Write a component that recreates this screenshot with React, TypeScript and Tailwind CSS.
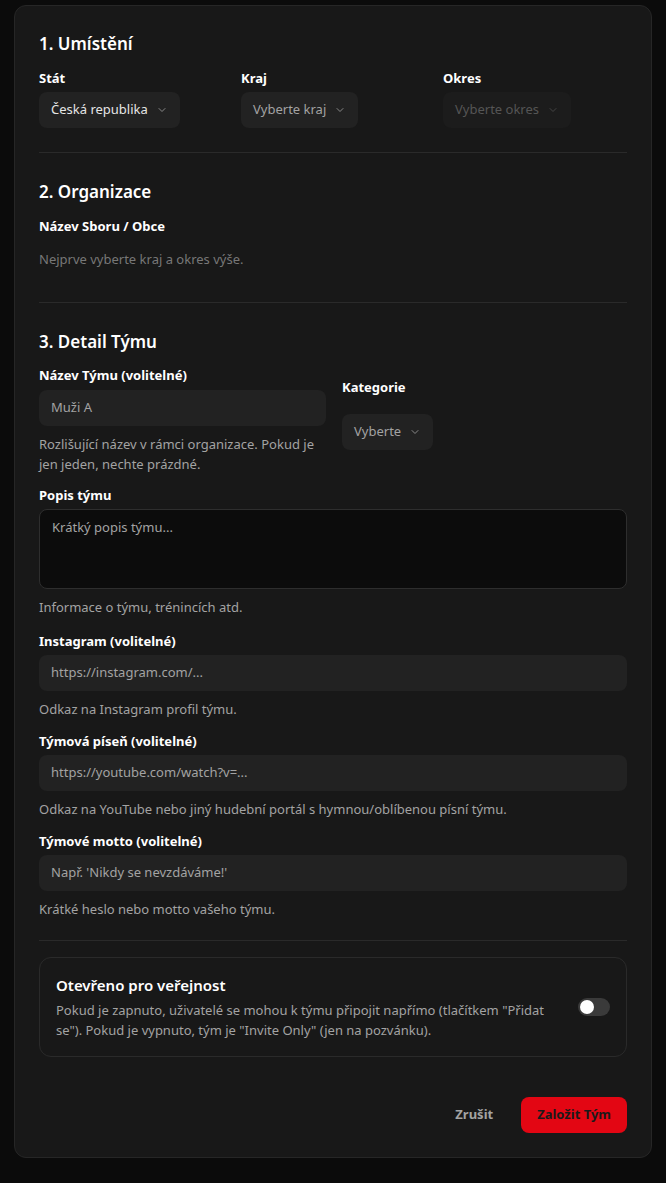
const Chevron = ({ className = "" }: { className?: string }) => (
  <svg width="12" height="12" viewBox="0 0 24 24" fill="none" stroke="currentColor" strokeWidth="2" strokeLinecap="round" strokeLinejoin="round" className={className}>
    <path d="m6 9 6 6 6-6" />
  </svg>
);

const Select = ({ text, dim = false, disabled = false }: { text: string; dim?: boolean; disabled?: boolean }) => (
  <div
    className={`flex h-9 w-fit items-center gap-2 rounded-lg px-3 text-[13px] ${
      disabled ? "bg-[#1c1c1c] text-[#555]" : dim ? "bg-[#222] text-[#a3a3a3]" : "bg-[#222] text-[#e5e5e5]"
    }`}
  >
    <span>{text}</span>
    <Chevron className={disabled ? "text-[#444]" : "text-[#888]"} />
  </div>
);

const Field = ({ label, placeholder, help }: { label: string; placeholder: string; help: string }) => (
  <div>
    <div className="text-[13px] font-bold text-white">{label}</div>
    <div className="mt-1 flex h-9 items-center rounded-lg bg-[#222] px-3 text-[13px] text-[#a3a3a3]">{placeholder}</div>
    <div className="mt-[9px] text-[13px] text-[#a3a3a3]">{help}</div>
  </div>
);

export default function App() {
  return (
    <div className="min-h-[1183px] bg-[#0b0b0b] px-[14px] pt-[5px] pb-[9px] font-['Inter',sans-serif]">
      <div className="rounded-xl border border-[#262626] bg-[#181818] px-6 pt-[25px] pb-6">
        <h2 className="text-[17px] font-semibold text-white">1. Umístění</h2>
        <div className="mt-3 grid grid-cols-[202px_202px_1fr]">
          <div>
            <div className="text-[13px] font-bold text-white">Stát</div>
            <div className="mt-1"><Select text="Česká republika" /></div>
          </div>
          <div>
            <div className="text-[13px] font-bold text-white">Kraj</div>
            <div className="mt-1"><Select text="Vyberte kraj" dim /></div>
          </div>
          <div>
            <div className="text-[13px] font-bold text-white">Okres</div>
            <div className="mt-1"><Select text="Vyberte okres" disabled /></div>
          </div>
        </div>
        <div className="mt-6 border-t border-[#2a2a2a]" />

        <h2 className="mt-[26px] text-[17px] font-semibold text-white">2. Organizace</h2>
        <div className="mt-3 text-[13px] font-bold text-white">Název Sboru / Obce</div>
        <div className="mt-[14px] text-[13px] text-[#777]">Nejprve vyberte kraj a okres výše.</div>
        <div className="mt-8 border-t border-[#2a2a2a]" />

        <h2 className="mt-[26px] text-[17px] font-semibold text-white">3. Detail Týmu</h2>
        <div className="mt-3 flex gap-4">
          <div className="w-[287px]">
            <div className="text-[13px] font-bold text-white">Název Týmu (volitelné)</div>
            <div className="mt-1 flex h-9 items-center rounded-lg bg-[#222] px-3 text-[13px] text-[#a3a3a3]">Muži A</div>
            <div className="mt-2 text-[13px] leading-5 text-[#a3a3a3]">Rozlišující název v rámci organizace. Pokud je jen jeden, nechte prázdné.</div>
          </div>
          <div className="pt-3">
            <div className="text-[13px] font-bold text-white">Kategorie</div>
            <div className="mt-4"><Select text="Vyberte" dim /></div>
          </div>
        </div>

        <div className="mt-3 text-[13px] font-bold text-white">Popis týmu</div>
        <div className="mt-1 h-20 rounded-lg border border-[#2e2e2e] bg-[#0c0c0c] px-3 pt-2 text-[13px] text-[#a3a3a3]">Krátký popis týmu...</div>
        <div className="mt-[9px] mb-[14px] text-[13px] text-[#a3a3a3]">Informace o týmu, trénincích atd.</div>

        <div className="flex flex-col gap-3">
          <Field label="Instagram (volitelné)" placeholder="https://instagram.com/..." help="Odkaz na Instagram profil týmu." />
          <Field label="Týmová píseň (volitelné)" placeholder="https://youtube.com/watch?v=..." help="Odkaz na YouTube nebo jiný hudební portál s hymnou/oblíbenou písní týmu." />
          <Field label="Týmové motto (volitelné)" placeholder="Např. 'Nikdy se nevzdáváme!'" help="Krátké heslo nebo motto vašeho týmu." />
        </div>
        <div className="mt-5 border-t border-[#2a2a2a]" />

        <div className="mt-4 flex items-center gap-6 rounded-xl border border-[#2a2a2a] px-4 py-4">
          <div className="flex-1">
            <div className="text-[15px] font-semibold text-white">Otevřeno pro veřejnost</div>
            <div className="mt-1 text-[13px] leading-5 text-[#a3a3a3]">
              Pokud je zapnuto, uživatelé se mohou k týmu připojit napřímo (tlačítkem "Přidat se"). Pokud je vypnuto, tým je "Invite Only" (jen na pozvánku).
            </div>
          </div>
          <div className="flex h-[18px] w-8 items-center rounded-full bg-[#3a3a3a] px-[2px]">
            <div className="h-[14px] w-[14px] rounded-full bg-white" />
          </div>
        </div>

        <div className="mt-10 flex items-center justify-end gap-4">
          <button className="px-3 text-[13px] font-bold text-[#a3a3a3]">Zrušit</button>
          <button className="h-9 rounded-lg bg-[#e30613] px-4 text-[13px] font-bold text-[#1a1a1a]">Založit Tým</button>
        </div>
      </div>
    </div>
  );
}
